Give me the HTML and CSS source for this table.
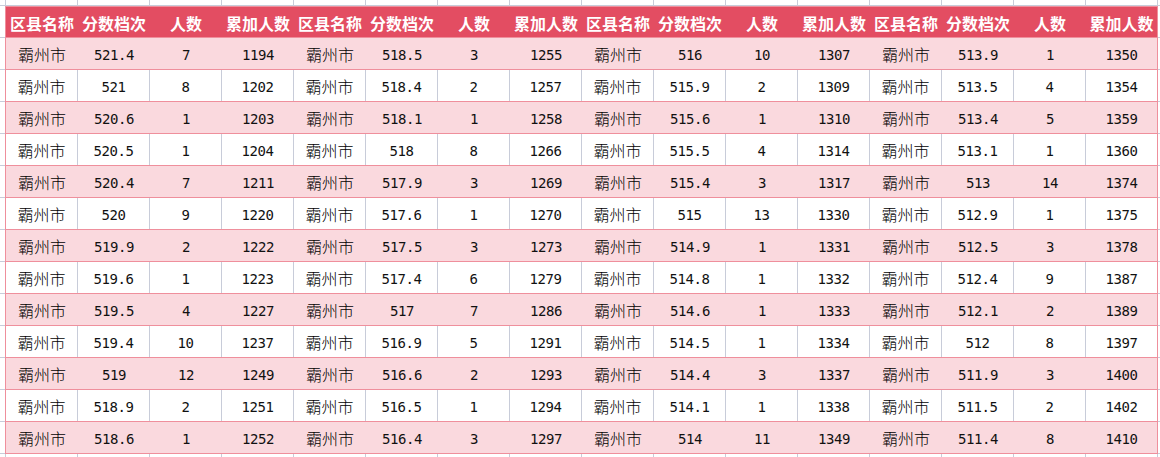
FILE: index.html
```html
<!DOCTYPE html>
<html lang="zh">
<head>
<meta charset="utf-8">
<title>霸州市 分数档次</title>
<link rel="stylesheet" href="styles.css">
</head>
<body>
<div class="sheet">
<div class="tbl">
<div class="row hd"><div class="cell">区县名称</div><div class="cell">分数档次</div><div class="cell">人数</div><div class="cell">累加人数</div><div class="cell">区县名称</div><div class="cell">分数档次</div><div class="cell">人数</div><div class="cell">累加人数</div><div class="cell">区县名称</div><div class="cell">分数档次</div><div class="cell">人数</div><div class="cell">累加人数</div><div class="cell">区县名称</div><div class="cell">分数档次</div><div class="cell">人数</div><div class="cell">累加人数</div></div>
<div class="row pk"><div class="cell c">霸州市</div><div class="cell n">521.4</div><div class="cell n">7</div><div class="cell n">1194</div><div class="cell c">霸州市</div><div class="cell n">518.5</div><div class="cell n">3</div><div class="cell n">1255</div><div class="cell c">霸州市</div><div class="cell n">516</div><div class="cell n">10</div><div class="cell n">1307</div><div class="cell c">霸州市</div><div class="cell n">513.9</div><div class="cell n">1</div><div class="cell n">1350</div></div>
<div class="row wt"><div class="cell c">霸州市</div><div class="cell n">521</div><div class="cell n">8</div><div class="cell n">1202</div><div class="cell c">霸州市</div><div class="cell n">518.4</div><div class="cell n">2</div><div class="cell n">1257</div><div class="cell c">霸州市</div><div class="cell n">515.9</div><div class="cell n">2</div><div class="cell n">1309</div><div class="cell c">霸州市</div><div class="cell n">513.5</div><div class="cell n">4</div><div class="cell n">1354</div></div>
<div class="row pk"><div class="cell c">霸州市</div><div class="cell n">520.6</div><div class="cell n">1</div><div class="cell n">1203</div><div class="cell c">霸州市</div><div class="cell n">518.1</div><div class="cell n">1</div><div class="cell n">1258</div><div class="cell c">霸州市</div><div class="cell n">515.6</div><div class="cell n">1</div><div class="cell n">1310</div><div class="cell c">霸州市</div><div class="cell n">513.4</div><div class="cell n">5</div><div class="cell n">1359</div></div>
<div class="row wt"><div class="cell c">霸州市</div><div class="cell n">520.5</div><div class="cell n">1</div><div class="cell n">1204</div><div class="cell c">霸州市</div><div class="cell n">518</div><div class="cell n">8</div><div class="cell n">1266</div><div class="cell c">霸州市</div><div class="cell n">515.5</div><div class="cell n">4</div><div class="cell n">1314</div><div class="cell c">霸州市</div><div class="cell n">513.1</div><div class="cell n">1</div><div class="cell n">1360</div></div>
<div class="row pk"><div class="cell c">霸州市</div><div class="cell n">520.4</div><div class="cell n">7</div><div class="cell n">1211</div><div class="cell c">霸州市</div><div class="cell n">517.9</div><div class="cell n">3</div><div class="cell n">1269</div><div class="cell c">霸州市</div><div class="cell n">515.4</div><div class="cell n">3</div><div class="cell n">1317</div><div class="cell c">霸州市</div><div class="cell n">513</div><div class="cell n">14</div><div class="cell n">1374</div></div>
<div class="row wt"><div class="cell c">霸州市</div><div class="cell n">520</div><div class="cell n">9</div><div class="cell n">1220</div><div class="cell c">霸州市</div><div class="cell n">517.6</div><div class="cell n">1</div><div class="cell n">1270</div><div class="cell c">霸州市</div><div class="cell n">515</div><div class="cell n">13</div><div class="cell n">1330</div><div class="cell c">霸州市</div><div class="cell n">512.9</div><div class="cell n">1</div><div class="cell n">1375</div></div>
<div class="row pk"><div class="cell c">霸州市</div><div class="cell n">519.9</div><div class="cell n">2</div><div class="cell n">1222</div><div class="cell c">霸州市</div><div class="cell n">517.5</div><div class="cell n">3</div><div class="cell n">1273</div><div class="cell c">霸州市</div><div class="cell n">514.9</div><div class="cell n">1</div><div class="cell n">1331</div><div class="cell c">霸州市</div><div class="cell n">512.5</div><div class="cell n">3</div><div class="cell n">1378</div></div>
<div class="row wt"><div class="cell c">霸州市</div><div class="cell n">519.6</div><div class="cell n">1</div><div class="cell n">1223</div><div class="cell c">霸州市</div><div class="cell n">517.4</div><div class="cell n">6</div><div class="cell n">1279</div><div class="cell c">霸州市</div><div class="cell n">514.8</div><div class="cell n">1</div><div class="cell n">1332</div><div class="cell c">霸州市</div><div class="cell n">512.4</div><div class="cell n">9</div><div class="cell n">1387</div></div>
<div class="row pk"><div class="cell c">霸州市</div><div class="cell n">519.5</div><div class="cell n">4</div><div class="cell n">1227</div><div class="cell c">霸州市</div><div class="cell n">517</div><div class="cell n">7</div><div class="cell n">1286</div><div class="cell c">霸州市</div><div class="cell n">514.6</div><div class="cell n">1</div><div class="cell n">1333</div><div class="cell c">霸州市</div><div class="cell n">512.1</div><div class="cell n">2</div><div class="cell n">1389</div></div>
<div class="row wt"><div class="cell c">霸州市</div><div class="cell n">519.4</div><div class="cell n">10</div><div class="cell n">1237</div><div class="cell c">霸州市</div><div class="cell n">516.9</div><div class="cell n">5</div><div class="cell n">1291</div><div class="cell c">霸州市</div><div class="cell n">514.5</div><div class="cell n">1</div><div class="cell n">1334</div><div class="cell c">霸州市</div><div class="cell n">512</div><div class="cell n">8</div><div class="cell n">1397</div></div>
<div class="row pk"><div class="cell c">霸州市</div><div class="cell n">519</div><div class="cell n">12</div><div class="cell n">1249</div><div class="cell c">霸州市</div><div class="cell n">516.6</div><div class="cell n">2</div><div class="cell n">1293</div><div class="cell c">霸州市</div><div class="cell n">514.4</div><div class="cell n">3</div><div class="cell n">1337</div><div class="cell c">霸州市</div><div class="cell n">511.9</div><div class="cell n">3</div><div class="cell n">1400</div></div>
<div class="row wt"><div class="cell c">霸州市</div><div class="cell n">518.9</div><div class="cell n">2</div><div class="cell n">1251</div><div class="cell c">霸州市</div><div class="cell n">516.5</div><div class="cell n">1</div><div class="cell n">1294</div><div class="cell c">霸州市</div><div class="cell n">514.1</div><div class="cell n">1</div><div class="cell n">1338</div><div class="cell c">霸州市</div><div class="cell n">511.5</div><div class="cell n">2</div><div class="cell n">1402</div></div>
<div class="row pk"><div class="cell c">霸州市</div><div class="cell n">518.6</div><div class="cell n">1</div><div class="cell n">1252</div><div class="cell c">霸州市</div><div class="cell n">516.4</div><div class="cell n">3</div><div class="cell n">1297</div><div class="cell c">霸州市</div><div class="cell n">514</div><div class="cell n">11</div><div class="cell n">1349</div><div class="cell c">霸州市</div><div class="cell n">511.4</div><div class="cell n">8</div><div class="cell n">1410</div></div>
</div>
</div>
</body>
</html>
```
FILE: styles.css
```css
* { box-sizing: border-box; }
html, body { margin: 0; padding: 0; background: #fff; }
.sheet {
  width: 1160px;
  height: 457px;
  overflow: hidden;
  padding: 6px 0 0 5px;
  background-color: #fff;
  background-image:
    linear-gradient(to right, #c8ccd9 1px, transparent 1px),
    linear-gradient(to bottom, #c8ccd9 1px, transparent 1px);
  background-size: 72px 32px, 72px 32px;
  background-position: 5px 0, 0 5px;
  font-family: "Noto Sans CJK SC", sans-serif;
  color: #000;
}
.tbl {
  width: 1153px;
  border-left: 1px solid #ef8f9c;
  border-right: 1px solid #ef8f9c;
  border-top: 1px solid #ef8f9c;
  background: #fff;
}
.row {
  display: grid;
  grid-template-columns: repeat(16, 72px);
  height: 32px;
  border-bottom: 1px solid #ef8f9c;
}
.row > .cell:last-child { width: 71px; border-right: none; }
.cell {
  display: flex;
  align-items: center;
  justify-content: center;
  height: 31px;
  white-space: nowrap;
}
.hd { background: #e34d62; height: 31px; }
.hd .cell {
  height: 31px;
  color: #fff;
  font-weight: 700;
  font-size: 16px;
}
.pk { background: #fad9de; }
.wt { background: #fff; }
.wt .cell { border-right: 1px solid #c8ccd9; }
.c { font-size: 16px; font-weight: 300; padding-top: 1px; }
.n {
  font-family: "DejaVu Sans Mono", "Liberation Mono", monospace;
  font-size: 14px;
  letter-spacing: -0.4px;
  color: #111;
  padding-top: 2px;
}
```
